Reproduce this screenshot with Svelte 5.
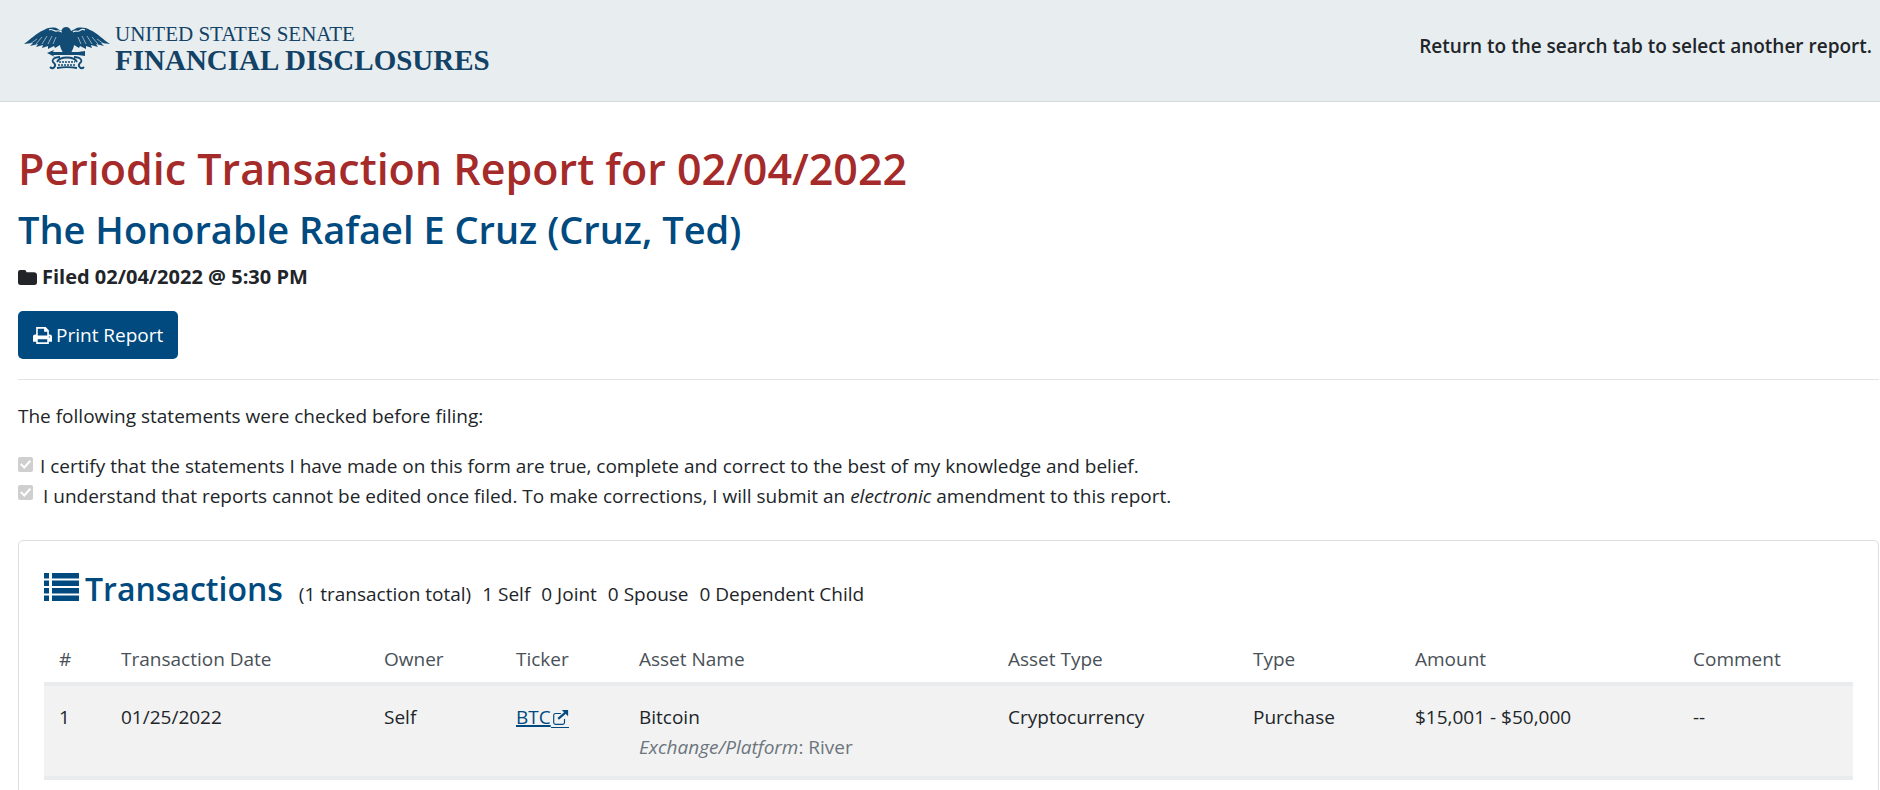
<script>
	const statements = [
		{ id: "certify", before: "I certify that the statements I have made on this form are true, complete and correct to the best of my knowledge and belief.", em: "", after: "" },
		{ id: "understand", before: "I understand that reports cannot be edited once filed. To make corrections, I will submit an ", em: "electronic", after: " amendment to this report." },
	];

	const counts = ["1 Self", "0 Joint", "0 Spouse", "0 Dependent Child"];

	const columns = [
		{ label: "#", width: 62 },
		{ label: "Transaction Date", width: 263 },
		{ label: "Owner", width: 132 },
		{ label: "Ticker", width: 123 },
		{ label: "Asset Name", width: 369 },
		{ label: "Asset Type", width: 245 },
		{ label: "Type", width: 162 },
		{ label: "Amount", width: 278 },
		{ label: "Comment", width: 175 },
	];
	const total = columns.reduce((sum, column) => sum + column.width, 0);

	const transactions = [
		{
			date: "01/25/2022",
			owner: "Self",
			ticker: "BTC",
			asset: "Bitcoin",
			platform: "River",
			assetType: "Cryptocurrency",
			type: "Purchase",
			amount: "$15,001 - $50,000",
			comment: "--",
		},
	];

	const print = () => window.print();
</script>

<header>
	<a class="brand" href="/">
		<svg class="eagle" viewBox="0 0 86 44" aria-hidden="true">
			<path d="M0 17C6 13 12 6 20 3C25 0 31 0 34 2L37 4L39 1C42 -1 46 0 47 4L51 2C54 0 61 0 66 3C74 6 79 13 86 17L77 16L80 19L72 17L74 20L67 18L68 21L62 19L62 22L56 19L55 21L50 18C50 21 48 23 47 26H39C38 23 36 21 36 18L31 21L30 19L24 22L24 19L18 21L19 18L12 20L14 17L6 19L9 16Z" />
			<path class="feathers" d="M13 12L6 17M18 10L12 17M23 9L18 17M28 9L24 17M32 10L29 17M73 12L80 17M68 10L74 17M63 9L68 17M58 9L62 17M54 10L57 17" />
			<path class="ribbon" d="M25 3C28 1 30 5 33 4C35 3 36 5 38 5M49 5C51 3 53 5 55 4C57 3 58 1 61 3" />
			<path d="M23 26L30 23L29 25H54L61 24V29L54 28H29L31 30Z" />
			<path class="scroll" d="M36 30C29 30 27 34 30 36C33 39 29 43 26 40M50 30C57 30 59 34 56 36C53 39 57 43 60 40M33 35C36 29 50 29 53 35M33 41C38 40 48 40 53 41" />
			<path class="motto" d="M35 35H51M34 38H52" />
		</svg>
		<span class="name">
			<span class="senate">UNITED STATES SENATE</span>
			<span class="disclosures">FINANCIAL DISCLOSURES</span>
		</span>
	</a>
	<strong class="notice">Return to the search tab to select another report.</strong>
</header>

<main>
	<h1>Periodic Transaction Report for 02/04/2022</h1>
	<h2>The Honorable Rafael E Cruz (Cruz, Ted)</h2>
	<p class="filed">
		<svg class="icon" viewBox="0 0 18 18" aria-hidden="true">
			<path d="M0 4Q0 2 2 2H6Q8 2 8 4H15Q18 4 18 7V14Q18 16 16 16H2Q0 16 0 14Z" />
		</svg>
		<strong>Filed 02/04/2022 @ 5:30 PM</strong>
	</p>
	<button type="button" on:click={print}>
		<svg class="icon" viewBox="0 0 18 18" aria-hidden="true">
			<path fill-rule="evenodd" d="M3 1H12L15 4V8H16Q18 8 18 10V15H15V17H3V15H0V10Q0 8 2 8H3ZM4.500 2.500V9H13.500V5.500H10.500V2.500ZM4.500 12.500V15.500H13.500V12.500ZM15 10V11H16V10Z" />
		</svg>
		Print Report
	</button>

	<hr />

	<p>The following statements were checked before filing:</p>
	<div class="statements">
		{#each statements as item}
			<div class="statement {item.id}">
				<input type="checkbox" id={item.id} checked disabled />
				<label for={item.id}>{item.before}<em>{item.em}</em>{item.after}</label>
			</div>
		{/each}
	</div>

	<section>
		<div class="title">
			<h3>
				<svg class="list" viewBox="0 0 35 28" aria-hidden="true">
					<path d="M0 0H5V5.500H0ZM8 0H35V5.500H8ZM0 7.500H5V13H0ZM8 7.500H35V13H8ZM0 15H5V20.500H0ZM8 15H35V20.500H8ZM0 22.500H5V28H0ZM8 22.500H35V28H8Z" />
				</svg>
				Transactions
			</h3>
			<span class="total">(1 transaction total)</span>
			{#each counts as count}
				<span>{count}</span>
			{/each}
		</div>

		<table>
			<colgroup>
				{#each columns as column}
					<col style="width: {(column.width / total) * 100}%" />
				{/each}
			</colgroup>
			<thead>
				<tr>
					{#each columns as column}
						<th scope="col">{column.label}</th>
					{/each}
				</tr>
			</thead>
			<tbody>
				{#each transactions as item, i}
					<tr>
						<td>{i + 1}</td>
						<td>{item.date}</td>
						<td>{item.owner}</td>
						<td>
							<a class="ticker" href="#{item.ticker}">{item.ticker}<svg class="external" viewBox="0 0 20 20" aria-hidden="true">
								<path class="box" d="M11 5H5Q3 5 3 7V15Q3 17 5 17H13Q15 17 15 15V11" />
								<path class="arrow" d="M8 11L16 4" />
								<path d="M12 1H19V8Z" />
							</svg></a>
						</td>
						<td>
							{item.asset}
							<div class="platform"><em>Exchange/Platform</em>: {item.platform}</div>
						</td>
						<td>{item.assetType}</td>
						<td>{item.type}</td>
						<td>{item.amount}</td>
						<td>{item.comment}</td>
					</tr>
				{/each}
			</tbody>
		</table>
	</section>
</main>

<style>
	:global(body) {
		background: #fff;
		color: #212529;
		font-family: "Open Sans", "Noto Sans", sans-serif;
		font-size: 19px;
		line-height: 30px;
		overflow: hidden;
	}
	header {
		display: flex;
		align-items: flex-start;
		justify-content: space-between;
		padding: 24px 8px 25px 24px;
		background: #e8edf0;
		border-bottom: 1px solid #d3dadd;
	}
	.brand {
		display: flex;
		gap: 5px;
		color: #124265;
		text-decoration: none;
		font-family: "Liberation Serif", serif;
	}
	.eagle {
		width: 86px;
		height: 44px;
		margin-top: 3px;
		fill: #124c74;
	}
	.feathers,
	.ribbon,
	.scroll,
	.motto {
		fill: none;
		stroke: #e8edf0;
		stroke-width: 0.6;
	}
	.ribbon {
		stroke-width: 1.2;
	}
	.scroll {
		stroke: #124c74;
		stroke-width: 1.8;
	}
	.motto {
		stroke: #124c74;
		stroke-width: 1.5;
		stroke-dasharray: 2 1;
	}
	.name {
		display: flex;
		flex-direction: column;
	}
	.senate {
		font-size: 21px;
		line-height: 20px;
	}
	.disclosures {
		font-size: 29px;
		font-weight: bold;
		line-height: 32px;
	}
	.notice {
		padding-top: 7px;
		font-weight: 600;
	}
	main {
		padding: 40px 1px 0 18px;
	}
	h1,
	h2,
	h3,
	p {
		margin: 0;
		font-weight: 600;
	}
	h1 {
		color: #a52a2a;
		font-size: 43px;
		line-height: 54px;
	}
	h2 {
		margin-top: 10px;
		color: #004a80;
		font-size: 38px;
		line-height: 46px;
	}
	p {
		font-weight: 400;
	}
	.filed {
		display: flex;
		align-items: center;
		gap: 5px;
		margin-top: 10px;
		font-size: 20px;
	}
	.icon {
		width: 19px;
		height: 19px;
		fill: currentColor;
	}
	button {
		display: flex;
		align-items: center;
		gap: 4px;
		margin-top: 19px;
		padding: 9px 15px;
		border: 0;
		border-radius: 5px;
		background: #004a80;
		color: #fff;
		font: inherit;
	}
	hr {
		margin: 20px 0 21px;
		border: 0;
		border-top: 1px solid #e2e3e4;
	}
	.statements {
		margin-top: 20px;
	}
	.statement {
		display: flex;
		align-items: flex-start;
		gap: 7px;
	}
	.understand {
		gap: 10px;
	}
	input {
		appearance: none;
		width: 15px;
		height: 15px;
		margin: 6px 0 0;
		border-radius: 2px;
		background: #cfcfcf;
	}
	.understand input {
		margin-top: 4px;
	}
	input::before {
		content: "";
		display: block;
		height: 100%;
		background: #fff;
		clip-path: polygon(14% 52%, 24% 42%, 41% 60%, 77% 20%, 87% 30%, 42% 80%);
	}
	section {
		margin-top: 29px;
		padding: 25px;
		border: 1px solid #dcdedf;
		border-radius: 5px;
	}
	.title {
		display: flex;
		align-items: baseline;
		gap: 11px;
	}
	h3 {
		display: flex;
		align-items: baseline;
		gap: 6px;
		color: #004a80;
		font-size: 32px;
		line-height: 46px;
	}
	.list {
		width: 35px;
		height: 28px;
		fill: currentColor;
	}
	.total {
		margin-left: 5px;
	}
	table {
		width: 100%;
		margin-top: 17px;
		border-collapse: collapse;
		table-layout: fixed;
	}
	th,
	td {
		padding: 15px;
		text-align: left;
		vertical-align: top;
		border-bottom: 4px solid #e9ebec;
	}
	th {
		padding-bottom: 8px;
		color: #495057;
		font-weight: 400;
	}
	td {
		padding: 16px 15px 14px;
	}
	tbody tr {
		background: #f2f2f2;
	}
	.ticker {
		color: #004a80;
		text-decoration-thickness: 2px;
	}
	.external {
		width: 18px;
		height: 18px;
		border-bottom: 1px solid;
		vertical-align: -4px;
		fill: currentColor;
	}
	.box,
	.arrow {
		fill: none;
		stroke: currentColor;
		stroke-width: 1.3;
	}
	.arrow {
		stroke-width: 2.4;
	}
	.platform {
		color: #6c757d;
	}
</style>
